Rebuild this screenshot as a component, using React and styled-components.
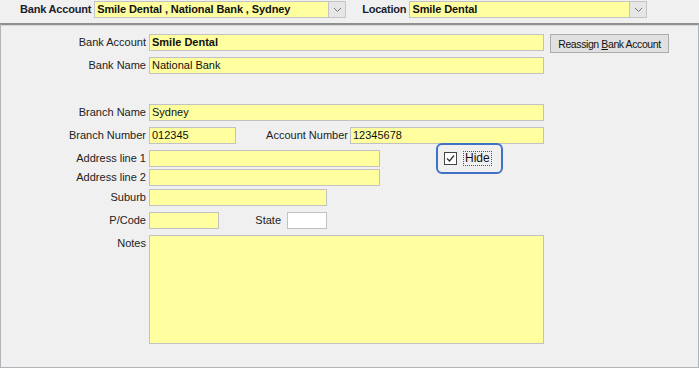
import React from "react";
import styled, { createGlobalStyle } from "styled-components";

const Global = createGlobalStyle`
  html, body { margin: 0; padding: 0; background: #f0f0f0; }
  body { font-family: "Liberation Sans", Arial, sans-serif; font-size: 11px; color: #222; }
`;

const Page = styled.div`
  width: 699px;
  height: 368px;
  background: #f0f0f0;
  display: flex;
  flex-direction: column;
  box-sizing: border-box;
`;

const TopBar = styled.div`
  height: 23px;
  display: flex;
  align-items: flex-start;
  padding-top: 1px;
  box-sizing: border-box;
`;

const TopLabel = styled.div`
  font-weight: bold;
  color: #1a1d2e;
  height: 17px;
  line-height: 17px;
  margin-left: ${p => p.$ml}px;
  margin-right: 3px;
  letter-spacing: -0.2px;
`;

const Combo = styled.div`
  width: ${p => p.$w}px;
  height: 17px;
  box-sizing: border-box;
  border: 1px solid #c4c4c4;
  background: #ffffa0;
  display: flex;
  align-items: stretch;
`;

const ComboText = styled.div`
  flex: 1;
  font-weight: bold;
  line-height: 15px;
  padding-left: 2px;
  color: #111;
  letter-spacing: -0.1px;
`;

const ComboArrow = styled.div`
  width: 16px;
  background: #e6e6e6;
  border-left: 1px solid #c4c4c4;
  display: flex;
  align-items: center;
  justify-content: center;
`;

const Panel = styled.div`
  flex: 1;
  border-top: 2px solid #8f8f8f;
  border-left: 1px solid #b0b4b8;
  border-right: 1px solid #b0b4b8;
  border-bottom: 1px solid #b0b4b8;
  box-shadow: inset 0 1px 0 #d8d8d8;
  padding-top: 9px;
  display: flex;
  flex-direction: column;
  box-sizing: border-box;
`;

const Row = styled.div`
  display: flex;
  align-items: flex-start;
  height: ${p => p.$h || 17}px;
  margin-top: ${p => p.$mt || 0}px;
`;

const Label = styled.div`
  width: ${p => p.$w || 145}px;
  text-align: right;
  line-height: 17px;
  margin-right: ${p => (p.$mr != null ? p.$mr : 3)}px;
  color: #222;
  white-space: nowrap;
`;

const Field = styled.div`
  width: ${p => p.$w}px;
  height: ${p => p.$h || 17}px;
  box-sizing: border-box;
  border: 1px solid #c2c2c2;
  background: ${p => (p.$white ? "#ffffff" : "#ffffa0")};
  line-height: 15px;
  padding-left: 2px;
  color: #111;
  font-weight: ${p => (p.$bold ? "bold" : "normal")};
  margin-left: ${p => p.$ml || 0}px;
`;

const Button = styled.div`
  margin-left: 6px;
  width: 119px;
  height: 19px;
  box-sizing: border-box;
  border: 1px solid #adadad;
  background: #e1e1e1;
  display: flex;
  align-items: center;
  justify-content: center;
  color: #111;
  font-size: 10.5px;
  letter-spacing: -0.4px;
  white-space: nowrap;
`;

const Underline = styled.span`
  text-decoration: underline;
`;

const HideBox = styled.div`
  margin-left: 56px;
  margin-top: -7px;
  width: 67px;
  height: 31px;
  box-sizing: border-box;
  border: 2px solid #3f72c6;
  border-radius: 6px;
  display: flex;
  align-items: center;
  padding-left: 6px;
  gap: 6px;
`;

const Check = styled.div`
  width: 13px;
  height: 13px;
  box-sizing: border-box;
  border: 1px solid #444;
  background: #fff;
  display: flex;
  align-items: center;
  justify-content: center;
`;

const HideText = styled.div`
  border: 1px dotted #555;
  padding: 0 1px;
  line-height: 13px;
  font-size: 12px;
  color: #111;
`;

export default function App() {
  return (
    <>
      <Global />
      <Page>
        <TopBar>
          <TopLabel $ml={20}>Bank Account</TopLabel>
          <Combo $w={252}>
            <ComboText>Smile Dental , National Bank , Sydney</ComboText>
            <ComboArrow>
              <svg width="9" height="6" viewBox="0 0 9 6">
                <path d="M1 1 L4.5 4.5 L8 1" fill="none" stroke="#777" strokeWidth="1" />
              </svg>
            </ComboArrow>
          </Combo>
          <TopLabel $ml={16}>Location</TopLabel>
          <Combo $w={238}>
            <ComboText>Smile Dental</ComboText>
            <ComboArrow>
              <svg width="9" height="6" viewBox="0 0 9 6">
                <path d="M1 1 L4.5 4.5 L8 1" fill="none" stroke="#777" strokeWidth="1" />
              </svg>
            </ComboArrow>
          </Combo>
        </TopBar>
        <Panel>
          <Row>
            <Label>Bank Account</Label>
            <Field $w={395} $bold>Smile Dental</Field>
            <Button>
              Reassign&nbsp;<Underline>B</Underline>ank Account
            </Button>
          </Row>
          <Row $mt={6}>
            <Label>Bank Name</Label>
            <Field $w={395}>National Bank</Field>
          </Row>
          <Row $mt={30}>
            <Label>Branch Name</Label>
            <Field $w={395}>Sydney</Field>
          </Row>
          <Row $mt={6}>
            <Label>Branch Number</Label>
            <Field $w={87}>012345</Field>
            <Label $w={112} $mr={2}>Account Number</Label>
            <Field $w={194}>12345678</Field>
          </Row>
          <Row $mt={6}>
            <Label>Address line 1</Label>
            <Field $w={231} />
            <HideBox>
              <Check>
                <svg width="11" height="11" viewBox="0 0 11 11">
                  <path d="M2 5.5 L4.5 8 L9 2.5" fill="none" stroke="#333" strokeWidth="1.3" />
                </svg>
              </Check>
              <HideText>Hide</HideText>
            </HideBox>
          </Row>
          <Row $mt={2}>
            <Label>Address line 2</Label>
            <Field $w={231} />
          </Row>
          <Row $mt={3}>
            <Label>Suburb</Label>
            <Field $w={178} />
          </Row>
          <Row $mt={6}>
            <Label>P/Code</Label>
            <Field $w={70} />
            <Label $w={62} $mr={6}>State</Label>
            <Field $w={40} $white />
          </Row>
          <Row $mt={6} $h={109}>
            <Label>Notes</Label>
            <Field $w={395} $h={109} />
          </Row>
        </Panel>
      </Page>
    </>
  );
}
